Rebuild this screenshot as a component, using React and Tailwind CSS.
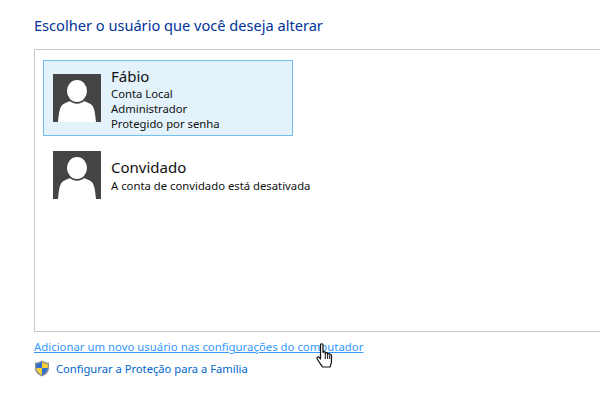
import React from "react";

function Avatar() {
  return (
    <svg width="48" height="48" viewBox="0 0 48 48" className="shrink-0 block">
      <rect width="48" height="48" fill="#444444" />
      <path d="M5 48 C6 37 7 32 10.500 30 C13 28.500 16 27.500 19 26.500 H29 C32 27.500 35 28.500 37.500 30 C41 32 42 37 43 48 Z" fill="#fff" />
      <ellipse cx="24" cy="17" rx="11.500" ry="12.700" fill="#444444" />
      <ellipse cx="24" cy="17" rx="10" ry="11" fill="#fff" />
    </svg>
  );
}

function Shield() {
  return (
    <svg width="16" height="17" viewBox="0 0 16 17" className="shrink-0 block">
      <path d="M8 .5 C10 2 12.500 2.600 15 2.600 V8 C15 12 12 15 8 16.500 C4 15 1 12 1 8 V2.600 C3.500 2.600 6 2 8 .5 Z" fill="#8a8f96" />
      <path d="M8 2 V8 H2.300 V3.800 C4.300 3.700 6.300 3.200 8 2 Z" fill="#2f6fd0" />
      <path d="M8 2 C9.700 3.200 11.700 3.700 13.700 3.800 V8 H8 Z" fill="#f6cf3a" />
      <path d="M2.300 8 H8 V14.800 C5 13.600 2.500 11.300 2.300 8 Z" fill="#f6cf3a" />
      <path d="M8 8 H13.700 C13.500 11.300 11 13.600 8 14.800 Z" fill="#2f6fd0" />
    </svg>
  );
}

function Hand() {
  return (
    <svg width="18" height="25" viewBox="0 0 18 25" className="block">
      <path
        d="M4.500 1.800 C4.500 .4 7 .4 7 1.800 V9.500 C7 8.300 9.300 8.300 9.300 9.500 V10.500 C9.300 9.300 11.600 9.300 11.600 10.500 V11.500 C11.600 10.300 15.500 10.300 15.500 12.500 V18 C15.500 21 14.500 22.500 14 24 H6.500 C5.500 22 3.500 20 1.200 16 C.5 14.500 2 13.300 3.200 14.300 L4.500 16 Z"
        fill="#fff"
        stroke="#111"
        strokeWidth="1.200"
        strokeLinejoin="round"
      />
      <path d="M9.300 10 V16 M11.600 11 V16 M13.700 11.500 V16" stroke="#111" strokeWidth="1" fill="none" />
    </svg>
  );
}

function Account({ name, lines, selected }) {
  return (
    <div
      className={
        "w-[250px] flex gap-[10px] pl-[9px] border " +
        (selected ? "h-[76px] pt-[13px] border-[#74c0ee] bg-[#e3f2fb]" : "h-[62px] pt-[5px] border-transparent")
      }
    >
      <Avatar />
      <div className={"flex flex-col " + (selected ? "-mt-[7px]" : "mt-[7px]")}>
        <div className={"text-[15px] leading-[19px] text-[#111] whitespace-nowrap " + (selected ? "" : "mb-[1px]")}>{name}</div>
        {lines.map((l) => (
          <div key={l} className="text-[11.300px] leading-[15px] text-[#111] whitespace-nowrap">{l}</div>
        ))}
      </div>
    </div>
  );
}

export default function App() {
  return (
    <div className="relative w-[600px] h-[417px] overflow-hidden bg-white pl-[34px] pt-[15px] font-['Noto_Sans','Open_Sans',sans-serif]">
      <h1 className="text-[14.600px] leading-[20px] text-[#003399] font-normal whitespace-nowrap">
        Escolher o usuário que você deseja alterar
      </h1>
      <div className="mt-[14px] w-[600px] h-[283px] border border-[#c8c8c8] pl-[8px] pt-[10px] flex flex-col gap-[9px]">
        <Account selected name="Fábio" lines={["Conta Local", "Administrador", "Protegido por senha"]} />
        <Account name="Convidado" lines={["A conta de convidado está desativada"]} />
      </div>
      <a className="block mt-[7px] text-[11.370px] leading-[16px] text-[#3399ff] underline whitespace-nowrap">
        Adicionar um novo usuário nas configurações do computador
      </a>
      <a className="mt-[5px] flex items-center gap-[6px] text-[11.200px] leading-[17px] text-[#0066cc] whitespace-nowrap">
        <Shield />
        Configurar a Proteção para a Família
      </a>
      <div className="absolute left-[316px] top-[343px]">
        <Hand />
      </div>
    </div>
  );
}
